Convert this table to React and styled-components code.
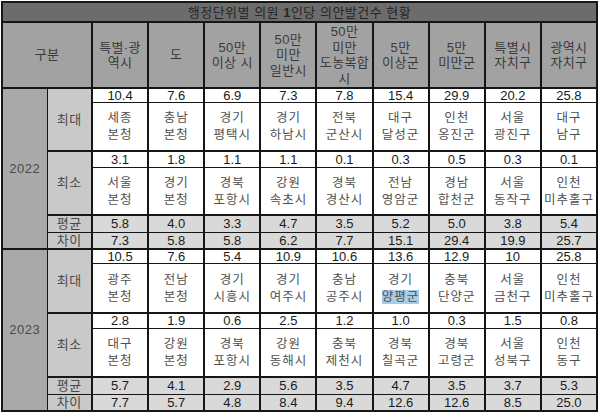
import React from 'react';
import styled, { createGlobalStyle } from 'styled-components';

const GlobalStyle = createGlobalStyle`
  html, body {
    margin: 0;
    padding: 0;
    background: #ffffff;
  }
  body {
    font-family: "Liberation Sans", "Noto Sans CJK KR", sans-serif;
  }
`;

const columns = [
  '특별·광\n역시',
  '도',
  '50만\n이상 시',
  '50만\n미만\n일반시',
  '50만\n미만\n도농복합\n시',
  '5만\n이상군',
  '5만\n미만군',
  '특별시\n자치구',
  '광역시\n자치구',
];

const years = [
  {
    year: '2022',
    maxNums: ['10.4', '7.6', '6.9', '7.3', '7.8', '15.4', '29.9', '20.2', '25.8'],
    maxNames: ['세종\n본청', '충남\n본청', '경기\n평택시', '경기\n하남시', '전북\n군산시', '대구\n달성군', '인천\n옹진군', '서울\n광진구', '대구\n남구'],
    minNums: ['3.1', '1.8', '1.1', '1.1', '0.1', '0.3', '0.5', '0.3', '0.1'],
    minNames: ['서울\n본청', '경기\n본청', '경북\n포항시', '강원\n속초시', '경북\n경산시', '전남\n영암군', '경남\n합천군', '서울\n동작구', '인천\n미추홀구'],
    avg: ['5.8', '4.0', '3.3', '4.7', '3.5', '5.2', '5.0', '3.8', '5.4'],
    diff: ['7.3', '5.8', '5.8', '6.2', '7.7', '15.1', '29.4', '19.9', '25.7'],
    heights: [14, 48, 17, 47, 18, 16],
  },
  {
    year: '2023',
    maxNums: ['10.5', '7.6', '5.4', '10.9', '10.6', '13.6', '12.9', '10', '25.8'],
    maxNames: ['광주\n본청', '전남\n본청', '경기\n시흥시', '경기\n여주시', '충남\n공주시', '경기\n양평군', '충북\n단양군', '서울\n금천구', '인천\n미추홀구'],
    minNums: ['2.8', '1.9', '0.6', '2.5', '1.2', '1.0', '0.3', '1.5', '0.8'],
    minNames: ['대구\n본청', '강원\n본청', '경북\n포항시', '강원\n동해시', '충북\n제천시', '경북\n칠곡군', '경북\n고령군', '서울\n성북구', '인천\n동구'],
    avg: ['5.7', '4.1', '2.9', '5.6', '3.5', '4.7', '3.5', '3.7', '5.3'],
    diff: ['7.7', '5.7', '4.8', '8.4', '9.4', '12.6', '12.6', '8.5', '25.0'],
    heights: [15, 49, 16, 48, 18, 16],
    highlight: '경기\n양평군',
  },
];

const Page = styled.div`
  padding: 1px 0 0 1px;
`;

const Table = styled.table`
  border-collapse: collapse;
  table-layout: fixed;
  width: 597px;
  font-size: 13px;
  line-height: 1;
  text-align: center;
`;

const Row = styled.tr`
  height: ${p => p.$h}px;
`;

const Cell = styled.td`
  border: 2px solid #161616;
  padding: 0;
  vertical-align: middle;
  color: #1a1a1a;
  background: ${p => p.$bg || '#ffffff'};
  ${p => p.$thinTop && 'border-top-width: 1px;'}
  ${p => p.$thinBottom && 'border-bottom-width: 1px;'}
  ${p => p.$thinLeft && 'border-left-width: 1px;'}
  ${p => p.$thinRight && 'border-right-width: 1px;'}
`;

const TitleCell = styled(Cell)`
  background: #6c6c6c;
  color: #262626;
  font-size: 13px;
  letter-spacing: 0.5px;
`;

const HeadCell = styled(Cell)`
  background: #a2a2a2;
  color: #3a3a3a;
  line-height: 15.5px;
  letter-spacing: 0.4px;
`;

const Label = styled(Cell)`
  color: #4a4a4a;
  letter-spacing: 0.5px;
`;

const Name = styled.span`
  display: inline-block;
  color: #505050;
  font-size: 12.5px;
  line-height: 17px;
  letter-spacing: 1px;
  padding-top: 2px;
`;

const Marked = styled.span`
  background: #a8cbe6;
`;

const Lines = ({ text, mark }) => {
  const parts = text.split('\n');
  return parts.map((part, i) => (
    <React.Fragment key={i}>
      {mark && i === parts.length - 1 ? <Marked>{part}</Marked> : part}
      {i < parts.length - 1 && <br />}
    </React.Fragment>
  ));
};

function YearBlock({ data }) {
  const [h0, h1, h2, h3, h4, h5] = data.heights;
  return (
    <>
      <Row $h={h0}>
        <Label rowSpan={6} $bg="#a9a9a9" $thinRight>{data.year}</Label>
        <Label rowSpan={2} $bg="#c9c9c9" $thinLeft>최대</Label>
        {data.maxNums.map((n, i) => (
          <Cell key={i} $thinBottom>{n}</Cell>
        ))}
      </Row>
      <Row $h={h1}>
        {data.maxNames.map((n, i) => (
          <Cell key={i} $thinTop>
            <Name><Lines text={n} mark={n === data.highlight} /></Name>
          </Cell>
        ))}
      </Row>
      <Row $h={h2}>
        <Label rowSpan={2} $bg="#c9c9c9" $thinLeft>최소</Label>
        {data.minNums.map((n, i) => (
          <Cell key={i} $thinBottom>{n}</Cell>
        ))}
      </Row>
      <Row $h={h3}>
        {data.minNames.map((n, i) => (
          <Cell key={i} $thinTop>
            <Name><Lines text={n} /></Name>
          </Cell>
        ))}
      </Row>
      <Row $h={h4}>
        <Label $bg="#c9c9c9" $thinLeft $thinBottom>평균</Label>
        {data.avg.map((n, i) => (
          <Cell key={i} $bg="#d9d9d9" $thinBottom>{n}</Cell>
        ))}
      </Row>
      <Row $h={h5}>
        <Label $bg="#c9c9c9" $thinLeft $thinTop>차이</Label>
        {data.diff.map((n, i) => (
          <Cell key={i} $bg="#d9d9d9" $thinTop>{n}</Cell>
        ))}
      </Row>
    </>
  );
}

export default function App() {
  return (
    <Page>
      <GlobalStyle />
      <Table>
        <colgroup>
          <col style={{ width: 45 }} />
          <col style={{ width: 45 }} />
          {columns.map((_, i) => (
            <col key={i} />
          ))}
        </colgroup>
        <tbody>
          <Row $h={20}>
            <TitleCell colSpan={11}>
              행정단위별 의원 <b>1</b>인당 의안발건수 현황
            </TitleCell>
          </Row>
          <Row $h={66}>
            <HeadCell colSpan={2}>구분</HeadCell>
            {columns.map((c, i) => (
              <HeadCell key={i}>
                <Lines text={c} />
              </HeadCell>
            ))}
          </Row>
          {years.map(y => (
            <YearBlock key={y.year} data={y} />
          ))}
        </tbody>
      </Table>
    </Page>
  );
}
